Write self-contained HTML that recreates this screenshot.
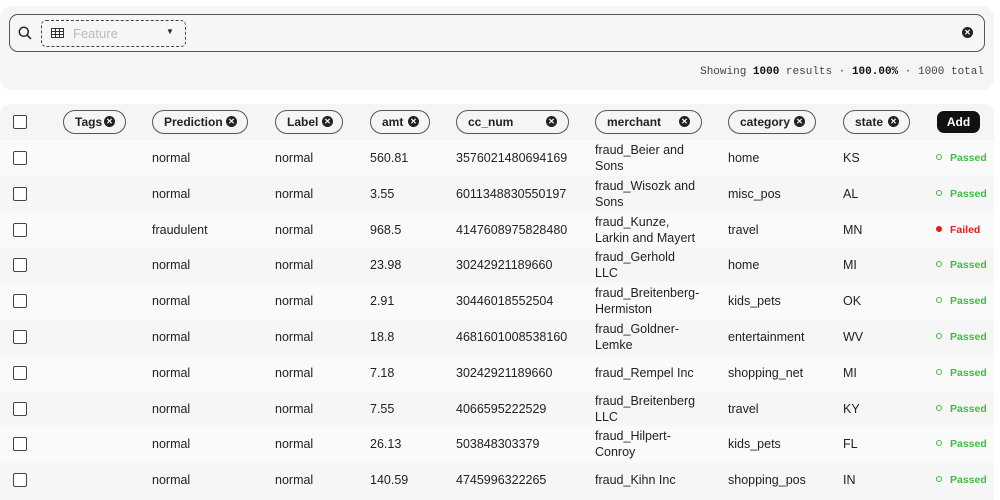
<!DOCTYPE html>
<html><head><meta charset="utf-8"><style>
*{box-sizing:border-box;margin:0;padding:0}
body{width:1000px;height:500px;background:#fff;font-family:"Liberation Sans",sans-serif;color:#222;position:relative;overflow:hidden;font-size:13px}
.abs{position:absolute}
.top{left:0;top:6px;width:994px;height:84px;background:#f5f5f5;border-radius:12px}
.search{left:9px;top:14px;width:976px;height:38px;border:1px solid #555;border-radius:9px;background:#f6f6f6}
.dd{left:41px;top:20px;width:145px;height:27px;border:1px dashed #444;border-radius:5px}
.stats{right:16px;top:66px;font-family:"Liberation Mono",monospace;font-size:11px;color:#444}
.stats b{color:#111}
.tbl{left:0;top:104px;width:994px;height:396px;background:#f5f5f5;border-radius:10px 10px 0 0;overflow:hidden}
.row{position:absolute;left:0;width:994px;height:35.8px}
.cb{position:absolute;left:13px;width:14px;height:14px;border:1.3px solid #444;border-radius:2px;background:#fff}
.pill{position:absolute;top:6px;height:24px;border:1.2px solid #555;border-radius:12px;font-weight:bold;font-size:12px;line-height:22px;padding-left:11px;color:#222}
.x{position:absolute;top:5px;width:11px;height:11px;border-radius:50%;background:#222;color:#fff;font-size:8px;line-height:11px;text-align:center;font-weight:bold}
.c{position:absolute;font-size:12.5px;line-height:16px;color:#222}
.st{position:absolute;left:936px;font-size:10.5px;font-weight:bold}
.dot{display:inline-block;width:6px;height:6px;border-radius:50%;margin-right:8px;vertical-align:1px}
</style></head><body>
<div class="abs top"></div>
<div class="abs search"></div>
<svg class="abs" style="left:18px;top:26px" width="14" height="14" viewBox="0 0 14 14"><circle cx="5.8" cy="5.8" r="4.5" fill="none" stroke="#222" stroke-width="1.5"/><line x1="9.2" y1="9.2" x2="13" y2="13" stroke="#222" stroke-width="1.5"/></svg>
<div class="abs dd"></div>
<svg class="abs" style="left:51px;top:28px" width="13" height="10" viewBox="0 0 13 10"><rect x="0.5" y="0.5" width="12" height="9" fill="none" stroke="#333"/><line x1="0" y1="3.5" x2="13" y2="3.5" stroke="#333"/><line x1="0" y1="6.5" x2="13" y2="6.5" stroke="#333"/><line x1="4.5" y1="0" x2="4.5" y2="10" stroke="#333"/><line x1="8.5" y1="0" x2="8.5" y2="10" stroke="#333"/></svg>
<div class="abs" style="left:73px;top:26px;color:#bbb;font-size:13px">Feature</div>
<div class="abs" style="left:166px;top:27px;font-size:8px">▼</div>
<div class="abs x" style="left:962px;top:27px;font-size:8px">✕</div>
<div class="abs stats">Showing <b>1000</b> results · <b>100.00%</b> · 1000 total</div>

<div class="abs tbl">
<div class="row" style="top:0;height:36px">
<div class="cb" style="top:11px"></div>
<div class="pill" style="left:63px;width:63px">Tags<span class="x" style="left:40px">✕</span></div>
<div class="pill" style="left:152px;width:96px">Prediction<span class="x" style="left:73px">✕</span></div>
<div class="pill" style="left:275px;width:68px">Label<span class="x" style="left:46px">✕</span></div>
<div class="pill" style="left:370px;width:60px">amt<span class="x" style="left:37px">✕</span></div>
<div class="pill" style="left:456px;width:113px">cc_num<span class="x" style="left:89px">✕</span></div>
<div class="pill" style="left:595px;width:107px">merchant<span class="x" style="left:83px">✕</span></div>
<div class="pill" style="left:728px;width:88px">category<span class="x" style="left:65px">✕</span></div>
<div class="pill" style="left:843px;width:67px">state<span class="x" style="left:44px">✕</span></div>
<div style="position:absolute;left:937px;top:7px;width:43px;height:22px;background:#111;color:#fff;border-radius:7px;font-weight:bold;font-size:12px;text-align:center;line-height:22px">Add</div>
</div>
</div>
<div id="rows"></div>
<script>
var d=[["normal","560.81","3576021480694169","fraud_Beier and<br>Sons","home","KS",1],
["normal","3.55","6011348830550197","fraud_Wisozk and<br>Sons","misc_pos","AL",1],
["fraudulent","968.5","4147608975828480","fraud_Kunze,<br>Larkin and Mayert","travel","MN",0],
["normal","23.98","30242921189660","fraud_Gerhold<br>LLC","home","MI",1],
["normal","2.91","30446018552504","fraud_Breitenberg-<br>Hermiston","kids_pets","OK",1],
["normal","18.8","4681601008538160","fraud_Goldner-<br>Lemke","entertainment","WV",1],
["normal","7.18","30242921189660","fraud_Rempel Inc","shopping_net","MI",1],
["normal","7.55","4066595222529","fraud_Breitenberg<br>LLC","travel","KY",1],
["normal","26.13","503848303379","fraud_Hilpert-<br>Conroy","kids_pets","FL",1],
["normal","140.59","4745996322265","fraud_Kihn Inc","shopping_pos","IN",1]];
var h="";
d.forEach(function(r,i){
var t=140+i*35.8,cy=t+17.9;
h+='<div class="abs" style="left:0;top:'+t+'px;width:994px;height:35.8px;background:'+(i%2?'#f6f6f6':'#fafafa')+'"></div>';
h+='<div class="cb" style="top:'+(cy-7)+'px"></div>';
var two=r[3].indexOf("<br>")>=0;
var cols=[[152,r[0]],[275,"normal"],[370,r[1]],[456,r[2]],[728,r[4]],[843,r[5]]];
cols.forEach(function(c){h+='<div class="c" style="left:'+c[0]+'px;top:'+(cy-8)+'px">'+c[1]+'</div>';});
h+='<div class="c" style="left:595px;top:'+(two?cy-16:cy-8)+'px">'+r[3]+'</div>';
h+=r[6]?'<div class="st" style="top:'+(cy-6)+'px;color:#3fbf3f"><span class="dot" style="border:1.3px solid #3fbf3f"></span>Passed</div>':'<div class="st" style="top:'+(cy-6)+'px;color:#e0201c"><span class="dot" style="background:#e0201c"></span>Failed</div>';
});
document.getElementById("rows").innerHTML=h;
</script>
</body></html>
